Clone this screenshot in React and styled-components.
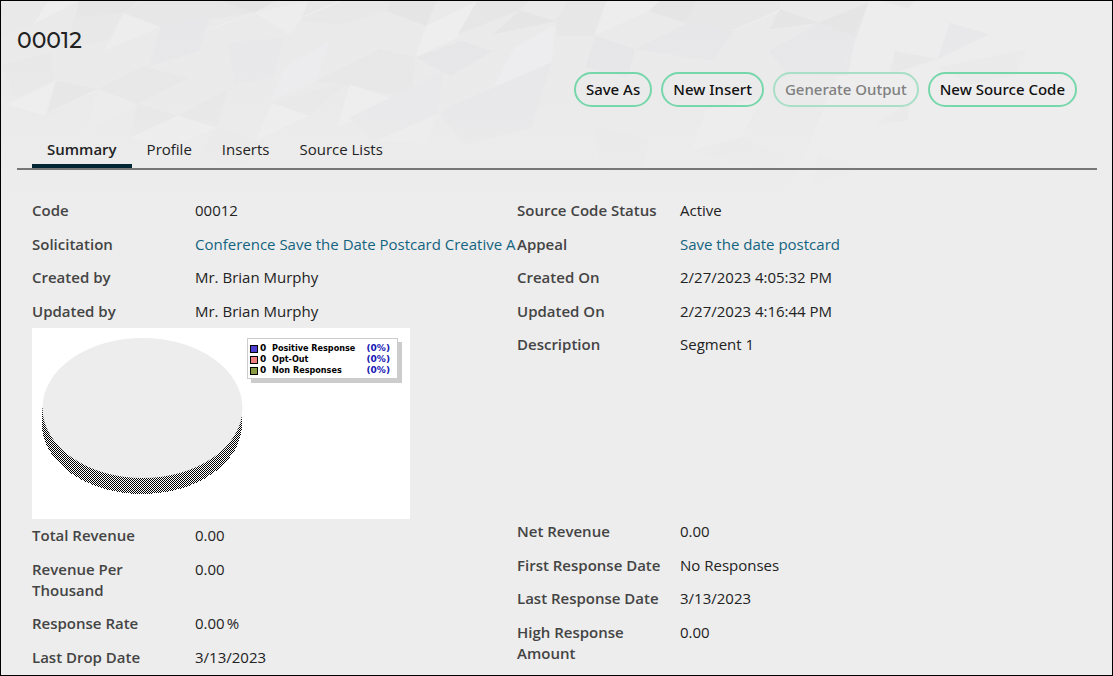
import React from "react";
import styled, { createGlobalStyle, css } from "styled-components";

const GlobalStyle = createGlobalStyle`
  *, *::before, *::after { box-sizing: border-box; }
  body {
    margin: 0;
    background: #ededed;
    color: #222;
    font-family: "Open Sans", "Noto Sans", sans-serif;
    font-size: 15px;
    line-height: 21px;
  }
`;

const Frame = styled.div`
  position: relative;
  isolation: isolate;
  min-height: 100vh;
  padding: 25px 15px 0 16px;
  border: 1px solid #000;
  background: #ededed;
  overflow: hidden;
`;

const Backdrop = styled.svg`
  position: absolute;
  z-index: -1;
  top: 0;
  left: 0;
  width: 100%;
  height: 213px;
  pointer-events: none;
`;

const Title = styled.h1`
  margin: 0;
  font-family: Montserrat, Inter, sans-serif;
  font-size: 22px;
  font-weight: 500;
  line-height: 30px;
`;

const Actions = styled.div`
  display: flex;
  justify-content: flex-end;
  gap: 9px;
  padding: 16px 20px 0 0;
`;

const ActionButton = styled.button`
  height: 35px;
  padding: 0 10px;
  border: 2px solid #76d7ab;
  border-radius: 18px;
  background: transparent;
  color: #111;
  font: 500 15px/21px "Noto Sans", "Open Sans", sans-serif;
  white-space: nowrap;
  cursor: pointer;

  &:disabled {
    border-color: #a8dfc6;
    color: #808080;
    cursor: default;
  }
`;

const TabBar = styled.nav`
  display: flex;
  margin-top: 25px;
  padding-left: 15px;
  border-bottom: 2px solid #777;
`;

const Tab = styled.a`
  height: 36px;
  padding: 7px 15px 0;
  border-bottom: 4px solid transparent;
  color: #222;
  text-decoration: none;
  ${({ $active }) =>
    $active &&
    css`
      border-color: #002633;
      font-weight: 600;
    `}
`;

const Panel = styled.main`
  display: grid;
  grid-template-columns: minmax(0, 485fr) minmax(0, 580fr);
  padding: 24px 0 0 15px;
`;

const FieldList = styled.dl`
  margin: 0;
`;

const Field = styled.div`
  display: grid;
  grid-template-columns: 163px minmax(0, 1fr);
  padding: 6px 0;
  min-height: ${({ $tall }) => ($tall ? "187px" : "0")};

  &:nth-child(odd) {
    padding-bottom: 7px;
  }
`;

const Label = styled.dt`
  padding-right: 12px;
  color: #444;
  font-weight: 600;
`;

const Value = styled.dd`
  margin: 0;
  white-space: nowrap;
`;

const Unit = styled.span`
  padding-left: 2px;
`;

const ValueLink = styled.a`
  color: #136480;
  text-decoration: none;
`;

const Chart = styled.figure`
  position: relative;
  width: 378px;
  height: 191px;
  margin: 0;
  background: #fff;
`;

const Legend = styled.table`
  position: absolute;
  top: 10px;
  right: 12px;
  width: 151px;
  height: 41px;
  padding: 4px 7px 2px 2px;
  border: 1px solid #ccc;
  border-spacing: 0;
  background: #fff;
  box-shadow: 4px 4px 0 #ccc;
  color: #000;
  font: bold 9px/11px "DejaVu Sans", sans-serif;

  td, th {
    padding: 0;
    text-align: left;
    white-space: nowrap;
  }

  td:first-child {
    width: 10px;
  }

  td:nth-child(2) {
    width: 12px;
  }

  td:last-child {
    text-align: right;
  }
`;

const LegendName = styled.th`
  font-family: "DejaVu Sans Condensed", "DejaVu Sans", sans-serif;
`;

const Swatch = styled.span`
  display: block;
  width: 8px;
  height: 8px;
  border: 1px solid #000;
  background: ${({ $color }) => $color};
`;

const Percent = styled.td`
  color: #1414b4;
`;

const facets = [
  ["0,0 130,0 90,70 0,110", "#e9e9ea"],
  ["130,5 220,0 90,70", "#f0f0f0"],
  ["220,0 390,0 345,35 210,50", "#e5e5e6"],
  ["345,35 450,78 290,150 310,110", "#efefef"],
  ["210,50 345,35 310,115 180,145", "#e8e8e9"],
  ["400,0 620,0 715,35 450,78 345,35", "#e7e7e8"],
  ["620,0 775,0 715,35", "#e2e2e3"],
  ["715,35 870,0 840,70 815,100", "#efeff0"],
  ["450,78 590,45 560,150 420,195", "#e7e7e9"],
  ["865,0 1100,0 1090,30 960,70 850,60", "#e8e8e8"],
  ["1100,0 1230,0 1200,75 1090,30", "#e4e4e5"],
  ["1345,0 1200,75 1170,170 1290,110", "#f0f0f0"],
  ["1345,0 1490,0 1465,28 1290,100", "#e5e5e6"],
  ["1465,28 1568,60 1390,100", "#e4e4e5"],
  ["640,125 800,110 770,230 660,250", "#e8e8ea"],
  ["800,200 930,120 890,240 760,300", "#eeeef0"],
  ["890,240 1070,145 1170,170 1160,290", "#e6e6e8"],
  ["1170,170 1300,120 1390,150 1270,225", "#e5e5e7"],
  ["1390,260 1450,140 1568,70 1555,185", "#efeff1"],
  ["0,190 140,155 150,240 40,290", "#e8e8e9"],
  ["15,310 155,240 125,345", "#f0f0f0"],
  ["155,240 275,265 130,345", "#e5e5e6"],
  ["275,265 400,195 530,230 385,310", "#e7e7e8"],
  ["275,265 385,310 240,395", "#eeeeee"],
  ["385,310 500,345 365,410", "#e6e6e7"],
  ["500,345 610,380 470,445 365,410", "#f0f0f0"],
  ["500,345 640,265 610,380", "#e7e7e8"],
  ["765,305 870,345 720,420", "#f0f0f0"],
  ["765,305 980,240 870,345", "#e8e8e9"],
  ["985,250 1120,300 950,380", "#f0f0f1"],
  ["985,350 1250,210 1230,340 1060,420", "#e8e8ea"],
  ["1240,340 1260,320 1555,185 1500,380 1310,430", "#e7e7e9"],
  ["1060,420 1230,340 1200,430", "#efeff1"],
  ["610,380 740,430 690,500 560,470", "#e8e8e9"],
  ["1568,60 1600,0 1710,0 1675,105 1568,105", "#e6e6e7"],
  ["1710,0 1860,0 1830,30 1675,105", "#efeff0"],
  ["1830,30 1860,0 1965,0 1935,65", "#e4e4e5"],
  ["1965,0 2200,0 2200,25 2065,90 1935,65", "#e7e7e8"],
  ["2200,25 2310,65 2170,85", "#e4e4e5"],
  ["2310,65 2450,5 2415,110", "#e4e4e5"],
  ["2490,0 2580,0 2560,22", "#e7e7e8"],
  ["1680,105 1790,145 1770,230 1650,200", "#e5e5e7"],
  ["1790,145 1940,65 2070,90 2010,180", "#e7e7e9"],
  ["2170,150 2310,65 2415,110 2390,225 2220,220", "#e7e7e9"],
  ["2680,65 2790,100 2645,175", "#e7e7e9"],
  ["2525,150 2645,175 2510,220", "#e6e6e8"],
  ["2645,200 2900,145 2870,220 2740,250", "#e9e9ea"],
  ["1680,380 1830,415 1810,540 1690,500", "#e8e8e9"],
  ["1990,330 2150,290 2090,410 1950,450", "#efeff0"],
  ["1950,450 2090,410 2230,470 2170,510", "#e8e8ea"],
  ["2310,460 2430,500 2290,560", "#e9e9ea"],
  ["2470,370 2570,300 2560,360", "#e8e8e9"],
  ["200,510 350,540 130,600", "#e9e9e9"],
  ["1700,530 1810,510 1900,570 1720,600", "#e9e9e9"],
];

const seams = ["130,340 270,268", "590,85 715,35", "2065,90 2200,28", "780,80 960,0"];

function Facets() {
  return (
    <Backdrop viewBox="0 0 3138 640" preserveAspectRatio="none" aria-hidden="true">
      <defs>
        <linearGradient id="fade" x1="0" y1="0" x2="0" y2="1">
          <stop offset="0" stopColor="#ededed" stopOpacity="0" />
          <stop offset="0.5" stopColor="#ededed" stopOpacity="0.2" />
          <stop offset="1" stopColor="#ededed" stopOpacity="1" />
        </linearGradient>
      </defs>
      <rect width="3138" height="640" fill="#eaeaeb" />
      <polygon points="2450,0 3138,0 3138,640 2200,640" fill="#ededee" />
      <g opacity="0.7">
        {facets.map(([points, fill]) => (
          <polygon key={points} points={points} fill={fill} />
        ))}
        {seams.map((points) => (
          <polyline key={points} points={points} fill="none" stroke="#f1f1f1" strokeWidth="3" />
        ))}
      </g>
      <rect width="3138" height="640" fill="url(#fade)" />
    </Backdrop>
  );
}

const legendRows = [
  ["Positive Response", "#4f3fd0"],
  ["Opt-Out", "#f08080"],
  ["Non Responses", "#8a9a45"],
];

function ResponseChart() {
  return (
    <Chart aria-label="Responses">
      <svg width="378" height="191" aria-hidden="true">
        <defs>
          <pattern id="dither" width="2" height="2" patternUnits="userSpaceOnUse">
            <rect width="2" height="2" fill="#fff" />
            <rect width="1" height="1" fill="#000" />
            <rect x="1" y="1" width="1" height="1" fill="#000" />
          </pattern>
        </defs>
        <path
          d="M10 80 V96 A100 70 0 0 0 210 96 V90 L205 80 Z"
          fill="url(#dither)"
          shapeRendering="crispEdges"
        />
        <ellipse cx="110.5" cy="80" rx="100" ry="70" fill="#ededed" />
      </svg>
      <Legend>
        <tbody>
          {legendRows.map(([name, color]) => (
            <tr key={name}>
              <td>
                <Swatch $color={color} />
              </td>
              <td>0</td>
              <LegendName scope="row">{name}</LegendName>
              <Percent>(0%)</Percent>
            </tr>
          ))}
        </tbody>
      </Legend>
    </Chart>
  );
}

function Fields({ items }) {
  return (
    <FieldList>
      {items.map(({ label, value, href, unit, tall }) => (
        <Field key={label} $tall={tall}>
          <Label>{label}</Label>
          <Value>
            {href ? <ValueLink href={href}>{value}</ValueLink> : value}
            {unit && <Unit>{unit}</Unit>}
          </Value>
        </Field>
      ))}
    </FieldList>
  );
}

const identity = [
  { label: "Code", value: "00012" },
  { label: "Solicitation", value: "Conference Save the Date Postcard Creative A", href: "#solicitation" },
  { label: "Created by", value: "Mr. Brian Murphy" },
  { label: "Updated by", value: "Mr. Brian Murphy" },
];

const revenue = [
  { label: "Total Revenue", value: "0.00" },
  { label: "Revenue Per Thousand", value: "0.00" },
  { label: "Response Rate", value: "0.00", unit: "%" },
  { label: "Last Drop Date", value: "3/13/2023" },
];

const status = [
  { label: "Source Code Status", value: "Active" },
  { label: "Appeal", value: "Save the date postcard", href: "#appeal" },
  { label: "Created On", value: "2/27/2023 4:05:32 PM" },
  { label: "Updated On", value: "2/27/2023 4:16:44 PM" },
  { label: "Description", value: "Segment 1", tall: true },
];

const responses = [
  { label: "Net Revenue", value: "0.00" },
  { label: "First Response Date", value: "No Responses" },
  { label: "Last Response Date", value: "3/13/2023" },
  { label: "High Response Amount", value: "0.00" },
];

export default function App() {
  return (
    <>
      <GlobalStyle />
      <Frame>
        <Facets />
        <Title>00012</Title>
        <Actions>
          <ActionButton type="button">Save As</ActionButton>
          <ActionButton type="button">New Insert</ActionButton>
          <ActionButton type="button" disabled>
            Generate Output
          </ActionButton>
          <ActionButton type="button">New Source Code</ActionButton>
        </Actions>
        <TabBar>
          <Tab href="#summary" $active aria-current="page">
            Summary
          </Tab>
          <Tab href="#profile">Profile</Tab>
          <Tab href="#inserts">Inserts</Tab>
          <Tab href="#source-lists">Source Lists</Tab>
        </TabBar>
        <Panel>
          <div>
            <Fields items={identity} />
            <ResponseChart />
            <Fields items={revenue} />
          </div>
          <div>
            <Fields items={status} />
            <Fields items={responses} />
          </div>
        </Panel>
      </Frame>
    </>
  );
}
